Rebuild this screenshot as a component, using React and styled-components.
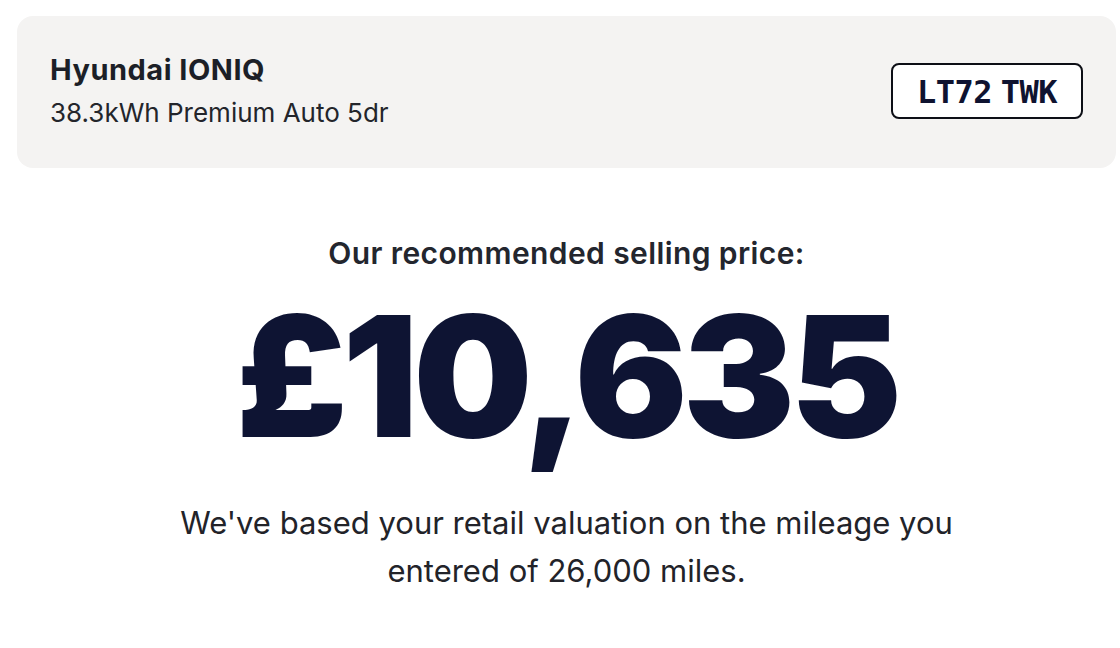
import React from "react";
import styled, { createGlobalStyle } from "styled-components";

const Global = createGlobalStyle`
  html, body { margin: 0; padding: 0; background: #ffffff; }
  body { font-family: Inter, "Noto Sans", sans-serif; color: #1f2128; }
`;

const Page = styled.div`
  width: 1120px;
  height: 648px;
  box-sizing: border-box;
  padding: 16px 4px 0 17px;
  overflow: hidden;
`;

const VehicleCard = styled.section`
  display: flex;
  align-items: center;
  justify-content: space-between;
  height: 152px;
  box-sizing: border-box;
  padding: 0 33px 3px 33px;
  background: #f4f3f2;
  border-radius: 16px;
`;

const VehicleInfo = styled.div`
  display: flex;
  flex-direction: column;
  gap: 12px;
`;

const VehicleName = styled.h2`
  margin: 0;
  font-size: 29px;
  font-weight: 700;
  letter-spacing: 0.5px;
  color: #1c1f27;
  line-height: 32px;
`;

const VehicleSpec = styled.p`
  margin: 0;
  font-size: 26px;
  font-weight: 400;
  color: #23252b;
  line-height: 30px;
`;

const Plate = styled.div`
  display: flex;
  align-items: center;
  justify-content: center;
  width: 192px;
  height: 56px;
  box-sizing: border-box;
  border: 2px solid #0d0f16;
  border-radius: 8px;
  background: #ffffff;
  font-family: "DejaVu Sans Mono", "Liberation Mono", monospace;
  font-weight: 700;
  font-size: 32px;
  color: #0f1330;
  letter-spacing: -0.5px;
  word-spacing: -10px;
  padding-top: 2px;
`;

const Valuation = styled.section`
  display: flex;
  flex-direction: column;
  align-items: center;
  text-align: center;
  padding-top: 67px;
`;

const Label = styled.h3`
  margin: 0;
  font-size: 30px;
  font-weight: 600;
  letter-spacing: 0.4px;
  color: #23262e;
  line-height: 36px;
`;

const Price = styled.div`
  margin-top: 20px;
  font-size: 168px;
  font-weight: 900;
  line-height: 170px;
  letter-spacing: -5px;
  color: #0e1433;
`;

const Note = styled.p`
  margin: 38px 0 0;
  max-width: 800px;
  font-size: 31px;
  font-weight: 400;
  line-height: 48px;
  letter-spacing: 0;
  color: #222329;
`;

export default function App() {
  return (
    <>
      <Global />
      <Page>
        <VehicleCard>
          <VehicleInfo>
            <VehicleName>Hyundai IONIQ</VehicleName>
            <VehicleSpec>38.3kWh Premium Auto 5dr</VehicleSpec>
          </VehicleInfo>
          <Plate>LT72 TWK</Plate>
        </VehicleCard>
        <Valuation>
          <Label>Our recommended selling price:</Label>
          <Price>£10,635</Price>
          <Note>
            We've based your retail valuation on the mileage you entered of 26,000 miles.
          </Note>
        </Valuation>
      </Page>
    </>
  );
}
